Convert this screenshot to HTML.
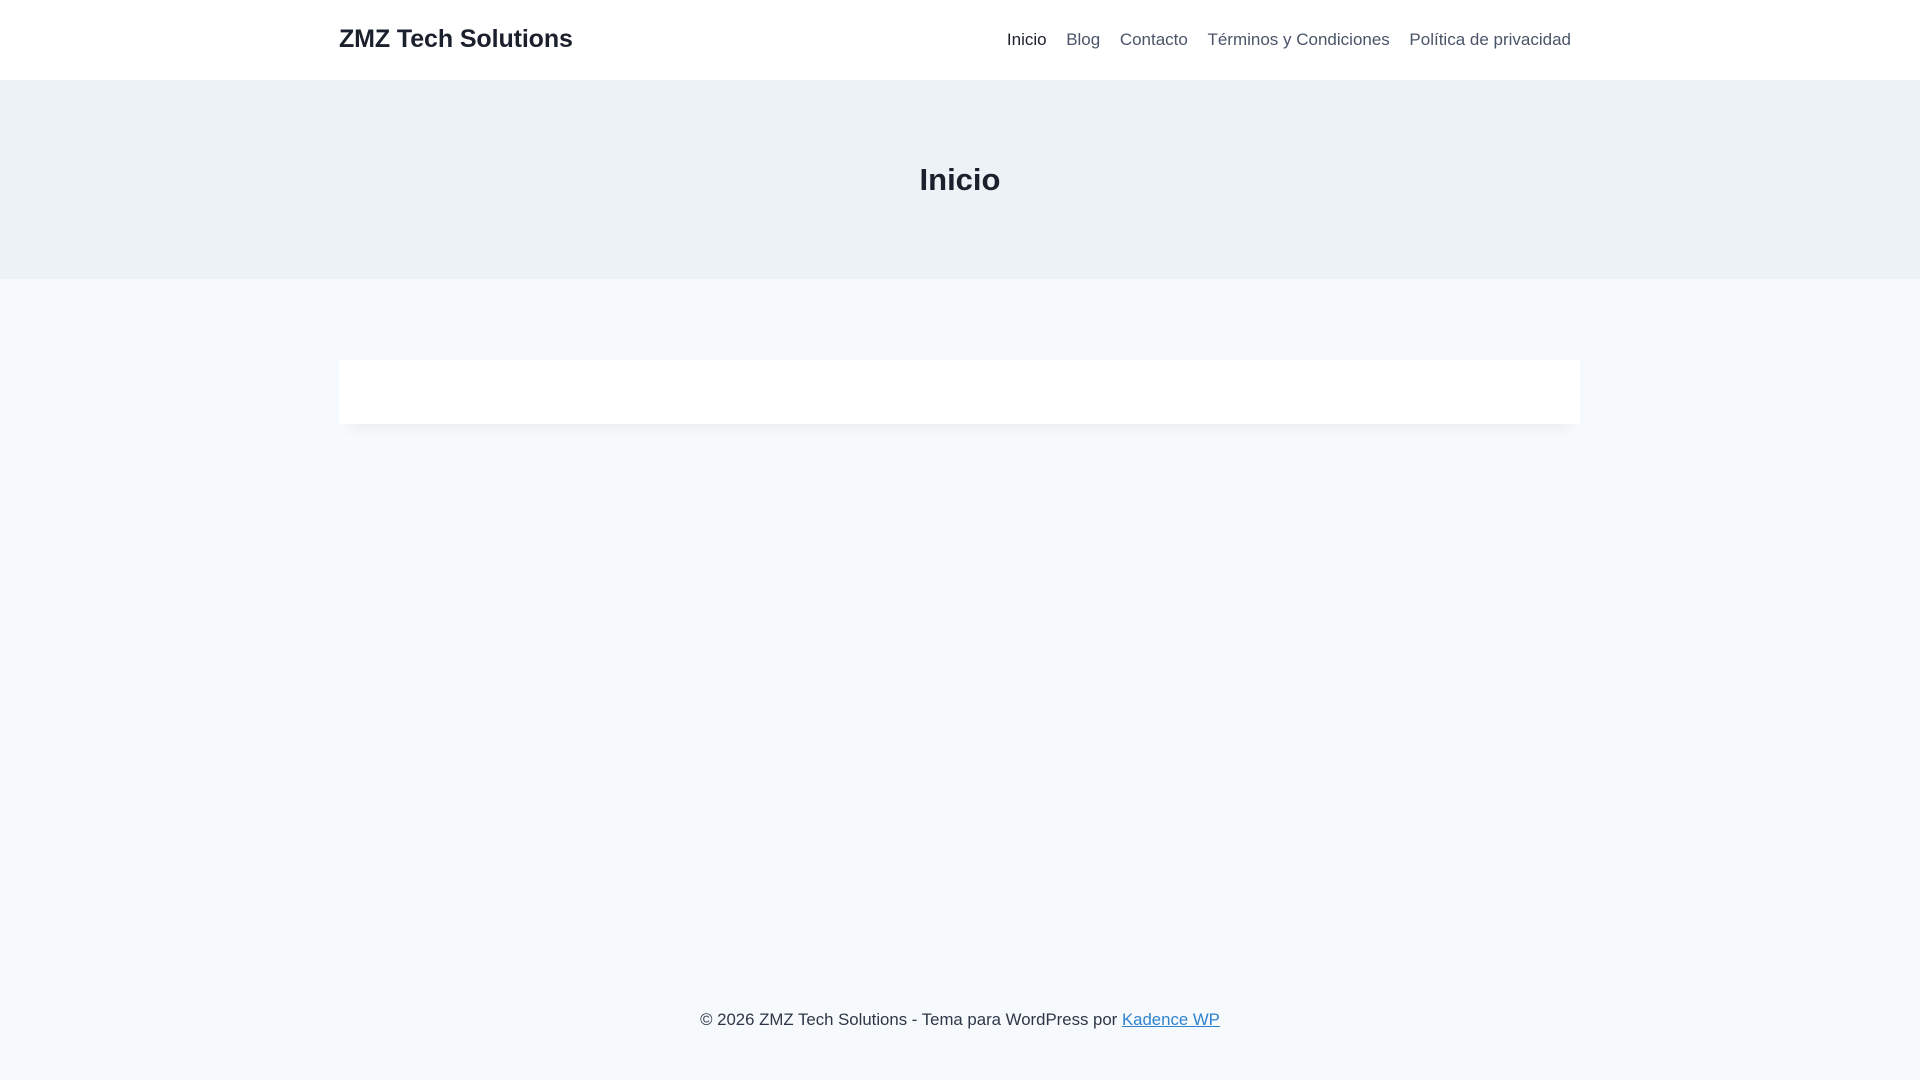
<!DOCTYPE html>
<html><head><meta charset="utf-8"><style>
*{margin:0;padding:0;box-sizing:border-box}
body{width:1920px;height:1080px;background:#f7fafc;font-family:"Liberation Sans",sans-serif;color:#2d3748;position:relative;overflow:hidden}
header{position:absolute;top:0;left:0;width:1920px;height:80px;background:#fff}
.logo{position:absolute;left:339px;top:25px;font-size:25px;font-weight:bold;color:#1a202c;letter-spacing:-0.1px}
nav{position:absolute;right:349px;top:30px;font-size:17px;color:#4a5568}
nav span{margin-left:19.6px}
nav span.a{color:#1a202c}
.hero{position:absolute;top:80px;left:0;width:1920px;height:199px;background:#edf2f7}
.hero h1{position:absolute;width:100%;text-align:center;top:82px;font-size:31px;font-weight:bold;color:#1a202c}
.card{position:absolute;left:339px;top:360px;width:1241px;height:64px;background:#fff;box-shadow:0 15px 15px -10px rgba(0,0,0,0.05)}
footer{position:absolute;top:1010px;width:100%;text-align:center;font-size:16.8px;color:#2d3748}
footer a{color:#3182ce;text-decoration:underline}
</style></head><body>
<header><div class="logo">ZMZ Tech Solutions</div>
<nav><span class="a">Inicio</span><span>Blog</span><span>Contacto</span><span>Términos y Condiciones</span><span>Política de privacidad</span></nav></header>
<div class="hero"><h1>Inicio</h1></div>
<div class="card"></div>
<footer>© 2026 ZMZ Tech Solutions - Tema para WordPress por <a>Kadence WP</a></footer>
</body></html>
